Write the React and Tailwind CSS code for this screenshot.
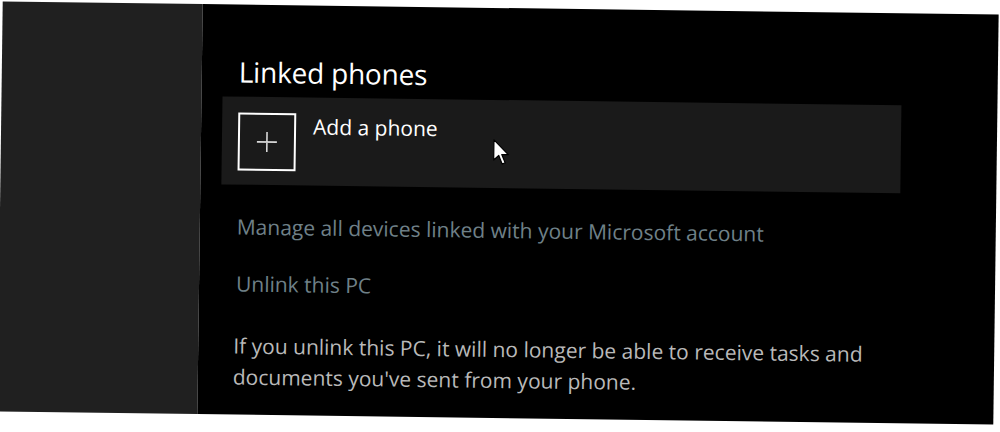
import React from "react";

export default function App() {
  return (
    <div
      className="w-[1000px] h-[432px] bg-white overflow-hidden pt-[8px]"
      style={{ fontFamily: '"Open Sans", "Noto Sans", "Liberation Sans", sans-serif' }}
    >
      <div className="w-[996px] h-[410px] flex rotate-[0.75deg] origin-center">
        <div className="w-[200px] shrink-0 bg-[#202020]" />
        <div className="flex-1 bg-black pl-[21px] pt-[50px] relative">
          <div className="w-[679px] flex flex-col">
            <h2 className="pl-4 text-[28px] leading-[34px] font-medium text-white tracking-[-0.2px]">
              Linked phones
            </h2>
            <div className="mt-[8px] h-[88px] bg-[#1a1a1a] flex items-start px-4 pt-[16px]">
              <div className="w-[58px] h-[58px] border-2 border-white flex items-center justify-center shrink-0">
                <svg width="22" height="22" viewBox="0 0 22 22">
                  <path d="M11 1v20M1 11h20" stroke="#d8d8d8" strokeWidth="1.6" fill="none" />
                </svg>
              </div>
              <div className="ml-[17px] text-[21px] leading-[26px] text-white">
                Add a phone
              </div>
            </div>
            <div className="pl-4 mt-[29px] text-[21px] leading-[26px] text-[#6f8088]">
              Manage all devices linked with your Microsoft account
            </div>
            <div className="pl-4 mt-[31px] text-[21px] leading-[26px] text-[#6f8088]">
              Unlink this PC
            </div>
            <div className="pl-[14px] mt-[34px] text-[21px] leading-[31px] text-[#b9b9b9] whitespace-nowrap">
              If you unlink this PC, it will no longer be able to receive tasks and
              <br />
              documents you've sent from your phone.
            </div>
          </div>
          <svg
            className="absolute left-[292px] top-[131px]"
            width="18"
            height="27"
            viewBox="0 0 18 27"
          >
            <path
              d="M1 1 L1 21 L6 16.5 L9.5 25 L12.5 23.8 L9 15.5 L15.5 15.5 Z"
              fill="#ffffff"
              stroke="#000000"
              strokeWidth="1.2"
              strokeLinejoin="round"
            />
          </svg>
        </div>
      </div>
    </div>
  );
}
